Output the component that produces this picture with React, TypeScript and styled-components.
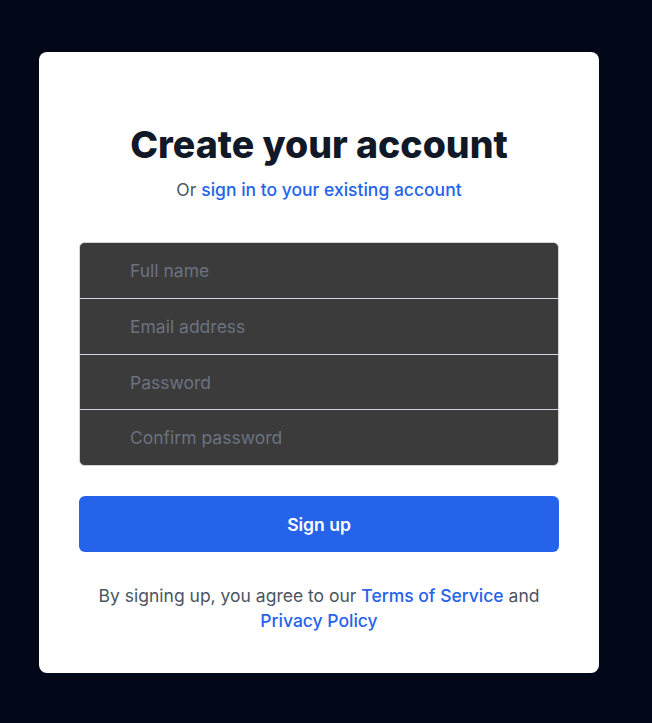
import React from "react";
import styled, { createGlobalStyle } from "styled-components";

const Global = createGlobalStyle`
  html, body { margin: 0; padding: 0; background: #020817; }
  body { font-family: Inter, "Noto Sans", sans-serif; }
  * { box-sizing: border-box; }
`;

const Page = styled.div`
  min-height: 723px;
  padding: 52px 0 50px 39px;
  display: flex;
  align-items: flex-start;
`;

const Card = styled.div`
  width: 560px;
  height: 621px;
  background: #ffffff;
  border-radius: 8px;
  padding: 73px 40px 0;
  display: flex;
  flex-direction: column;
`;

const Title = styled.h2`
  margin: 0;
  text-align: center;
  font-size: 37.5px;
  line-height: 40px;
  font-weight: 800;
  color: #111827;
`;

const Sub = styled.p`
  margin: 12px 0 0;
  text-align: center;
  font-size: 17.5px;
  line-height: 25px;
  color: #4b5563;
`;

const Link = styled.a`
  color: #2563eb;
  font-weight: 450;
  text-decoration: none;
`;

const Group = styled.div`
  margin-top: 40px;
  border: 1px solid #d1d5db;
  border-radius: 6px;
  overflow: hidden;
  display: flex;
  flex-direction: column;
  background: #3b3b3b;
`;

const Input = styled.input<{ $first?: boolean; $h: number }>`
  height: ${(p) => p.$h}px;
  border: none;
  border-top: ${(p) => (p.$first ? "none" : "1px solid #d1d5db")};
  background: #3b3b3b;
  padding: 0 12px 0 50px;
  font-family: Inter, "Noto Sans", sans-serif;
  font-size: 17.5px;
  color: #e5e7eb;
  outline: none;
  &::placeholder { color: #6b7280; }
`;

const Button = styled.button`
  margin-top: 30px;
  height: 56px;
  border: none;
  border-radius: 6px;
  background: #2563eb;
  color: #ffffff;
  font-family: Inter, "Noto Sans", sans-serif;
  font-size: 17.5px;
  font-weight: 600;
  cursor: pointer;
`;

const Terms = styled.p`
  margin: 31px 0 0;
  text-align: center;
  font-size: 17.5px;
  line-height: 25px;
  color: #4b5563;
`;

export default function App() {
  return (
    <>
      <Global />
      <Page>
        <Card>
          <Title>Create your account</Title>
          <Sub>
            Or <Link href="#">sign in to your existing account</Link>
          </Sub>
          <Group>
            <Input $first $h={55} placeholder="Full name" />
            <Input $h={56} placeholder="Email address" />
            <Input $h={55} placeholder="Password" type="password" />
            <Input $h={56} placeholder="Confirm password" type="password" />
          </Group>
          <Button>Sign up</Button>
          <Terms>
            By signing up, you agree to our <Link href="#">Terms of Service</Link> and{" "}
            <Link href="#">Privacy Policy</Link>
          </Terms>
        </Card>
      </Page>
    </>
  );
}
